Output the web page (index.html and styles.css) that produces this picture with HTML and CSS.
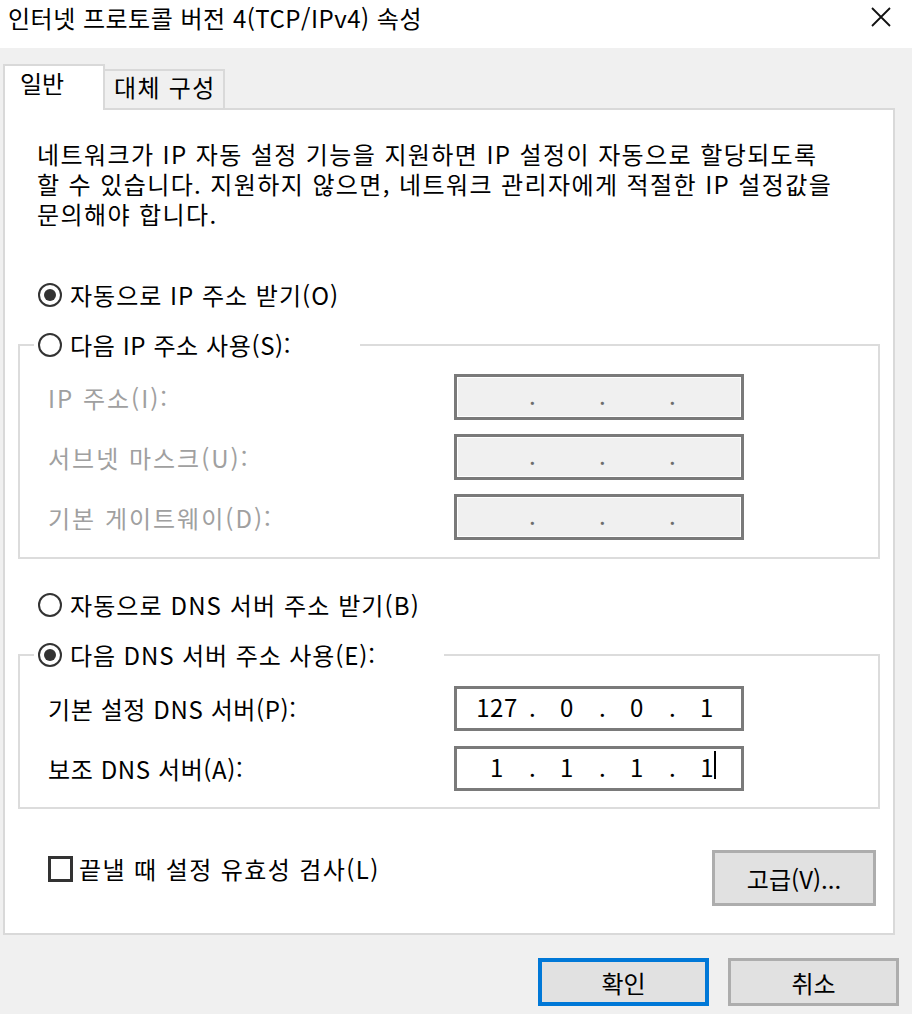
FILE: index.html
```html
<!DOCTYPE html>
<html lang="ko">
    <head>
        <meta charset="UTF-8">
        <meta name="viewport" content="width=device-width, initial-scale=1.0">
        <title>인터넷 프로토콜 버전 4(TCP/IPv4) 속성</title>
        <link rel="stylesheet" href="styles.css">
    </head>
    <body>
        <div class="titlebar">
            <span class="title">인터넷 프로토콜 버전 4(TCP/IPv4) 속성</span>
            <svg class="close" viewBox="0 0 20 20">
                <path d="M1 1L19 19M19 1L1 19" stroke="#111" stroke-width="1.8" fill="none"/>
            </svg>
        </div>

        <div class="client">
            <div class="tabs">
                <div class="tab tab-active">일반</div>
                <div class="tab tab-other">대체 구성</div>
            </div>

            <div class="panel">
                <p class="intro">네트워크가 IP 자동 설정 기능을 지원하면 IP 설정이 자동으로 할당되도록<br>할 수 있습니다. 지원하지 않으면, 네트워크 관리자에게 적절한 IP 설정값을<br>문의해야 합니다.</p>

                <div class="option option-row auto-ip"><span class="radio radio-on"></span>자동으로 IP 주소 받기(O)</div>

                <fieldset class="group ip-group">
                    <legend class="group-title ip-title">
                        <span class="option"><span class="radio"></span>다음 IP 주소 사용(S):</span>
                    </legend>
                    <div class="field-row">
                        <span class="field-label off">IP 주소(I):</span>
                        <div class="ip-box ip-box-off">
                            <span class="octet"></span><span class="dot">.</span><span class="octet"></span><span class="dot">.</span><span class="octet"></span><span class="dot">.</span><span class="octet"></span>
                        </div>
                    </div>
                    <div class="field-row">
                        <span class="field-label off">서브넷 마스크(U):</span>
                        <div class="ip-box ip-box-off">
                            <span class="octet"></span><span class="dot">.</span><span class="octet"></span><span class="dot">.</span><span class="octet"></span><span class="dot">.</span><span class="octet"></span>
                        </div>
                    </div>
                    <div class="field-row">
                        <span class="field-label off">기본 게이트웨이(D):</span>
                        <div class="ip-box ip-box-off">
                            <span class="octet"></span><span class="dot">.</span><span class="octet"></span><span class="dot">.</span><span class="octet"></span><span class="dot">.</span><span class="octet"></span>
                        </div>
                    </div>
                </fieldset>

                <div class="option option-row auto-dns"><span class="radio"></span>자동으로 DNS 서버 주소 받기(B)</div>

                <fieldset class="group dns-group">
                    <legend class="group-title dns-title">
                        <span class="option"><span class="radio radio-on"></span>다음 DNS 서버 주소 사용(E):</span>
                    </legend>
                    <div class="field-row">
                        <span class="field-label">기본 설정 DNS 서버(P):</span>
                        <div class="ip-box">
                            <span class="octet">127</span><span class="dot">.</span><span class="octet">0</span><span class="dot">.</span><span class="octet">0</span><span class="dot">.</span><span class="octet">1</span>
                        </div>
                    </div>
                    <div class="field-row">
                        <span class="field-label">보조 DNS 서버(A):</span>
                        <div class="ip-box">
                            <span class="octet">1</span><span class="dot">.</span><span class="octet">1</span><span class="dot">.</span><span class="octet">1</span><span class="dot">.</span><span class="octet"><span class="caret">1</span></span>
                        </div>
                    </div>
                </fieldset>

                <div class="bottom-row">
                    <label class="check-row"><span class="checkbox"></span>끝낼 때 설정 유효성 검사(L)</label>
                    <button class="btn btn-advanced">고급(V)...</button>
                </div>
            </div>

            <div class="footer">
                <button class="btn btn-dialog btn-default">확인</button>
                <button class="btn btn-dialog">취소</button>
            </div>
        </div>
    </body>
</html>
```

FILE: styles.css
```css
*{
    margin: 0;
    padding: 0;
    box-sizing: border-box;
}

body{
    width: 912px;
    height: 1014px;
    overflow: hidden;
    background-color: #f0f0f0;
    font-family: "Noto Sans CJK KR", "Noto Sans", sans-serif;
    font-size: 24px;
    letter-spacing: 1.3px;
    color: #000;
}

.titlebar{
    display: flex;
    justify-content: space-between;
    align-items: flex-start;
    height: 48px;
    padding: 3px 21px 0 8px;
    background-color: #fff;
}

.title{
    line-height: 30px;
    letter-spacing: 0.5px;
}

.close{
    width: 20px;
    height: 20px;
    margin-top: 4px;
}

.client{
    padding: 16px 17px 0 3px;
}

.tabs{
    display: flex;
    align-items: flex-end;
    height: 44px;
}

.tab{
    line-height: 30px;
    border: 2px solid #d9d9d9;
    border-bottom: none;
}

.tab-active{
    position: relative;
    z-index: 1;
    width: 102px;
    height: 46px;
    margin-bottom: -2px;
    padding: 2px 0 0 15px;
    background-color: #fff;
    letter-spacing: 0;
}

.tab-other{
    width: 120px;
    height: 39px;
    border-left: none;
    padding: 1px 0 0 9px;
}

.panel{
    border: 2px solid #d9d9d9;
    background-color: #fff;
    padding: 0 13px 27px 13px;
}

.intro{
    margin: 29px 0 0 19px;
    line-height: 30px;
    letter-spacing: 1.4px;
    white-space: nowrap;
}

/* radio rows */
.option{
    display: flex;
    align-items: center;
    gap: 8px;
    height: 30px;
    line-height: 30px;
    white-space: nowrap;
}

.option-row{
    margin-left: 20px;
}

.auto-ip{
    margin-top: 51px;
    letter-spacing: 1px;
}

.auto-dns{
    margin-top: 31px;
    letter-spacing: 1.1px;
}

.radio{
    display: flex;
    align-items: center;
    justify-content: center;
    flex: none;
    width: 24px;
    height: 24px;
    border: 2px solid #333;
    border-radius: 50%;
    background-color: #fff;
}

.radio-on::after{
    content: "";
    width: 12px;
    height: 12px;
    border-radius: 50%;
    background-color: #333;
}

/* group boxes */
.group{
    margin-top: 20px;
    border: 2px solid #dcdcdc;
    padding: 14px 0 17px 14px;
}

.group-title{
    padding-left: 4px;
    background-color: #fff;
}

.ip-title{
    width: 326px;
    letter-spacing: 0.6px;
}

.dns-title{
    width: 410px;
    letter-spacing: 0.9px;
}

.dns-group{
    padding: 16px 0 16px 14px;
}

.field-row{
    display: grid;
    grid-template-columns: 406px 290px;
    align-items: center;
    height: 46px;
    padding-left: 14px;
}

.field-row + .field-row{
    margin-top: 14px;
}

.dns-group .field-row{
    height: 45px;
}

.dns-group .field-row + .field-row{
    margin-top: 15px;
}

.field-label{
    white-space: nowrap;
}

.ip-group .field-label{
    letter-spacing: 2px;
}

.dns-group .field-label{
    letter-spacing: 0.6px;
}

.off{
    color: #a0a0a0;
}

.ip-box{
    display: flex;
    align-items: center;
    height: 100%;
    padding: 0 0 4px 8px;
    border: 3px solid #7a7a7a;
    line-height: 30px;
    letter-spacing: 0.5px;
}

.ip-box-off{
    background-color: #f0f0f0;
    box-shadow: inset 0 0 0 1px #fff;
    color: #6d6d6d;
}

.octet{
    width: 64px;
    text-align: center;
}

.dot{
    width: 6px;
    text-align: center;
    letter-spacing: 0;
}

.caret{
    position: relative;
    letter-spacing: 0;
}

.caret::after{
    content: "";
    position: absolute;
    left: 100%;
    top: 2px;
    width: 2px;
    height: 28px;
    background-color: #000;
}

/* bottom */
.bottom-row{
    display: flex;
    justify-content: space-between;
    align-items: flex-start;
    margin-top: 41px;
    padding-right: 4px;
}

.check-row{
    display: flex;
    align-items: center;
    gap: 6px;
    height: 26px;
    margin: 6px 0 0 30px;
    line-height: 30px;
    letter-spacing: 1.4px;
}

.checkbox{
    width: 25px;
    height: 26px;
    border: 3px solid #333;
}

.btn{
    font: inherit;
    letter-spacing: 0;
    color: #000;
    background-color: #e1e1e1;
    border: 3px solid #adadad;
}

.btn-advanced{
    width: 164px;
    height: 56px;
}

.footer{
    display: flex;
    justify-content: flex-end;
    gap: 19px;
    margin: 23px -4px 0 0;
}

.btn-dialog{
    width: 171px;
    height: 48px;
}

.btn-default{
    border: 4px solid #0078d7;
}
```
